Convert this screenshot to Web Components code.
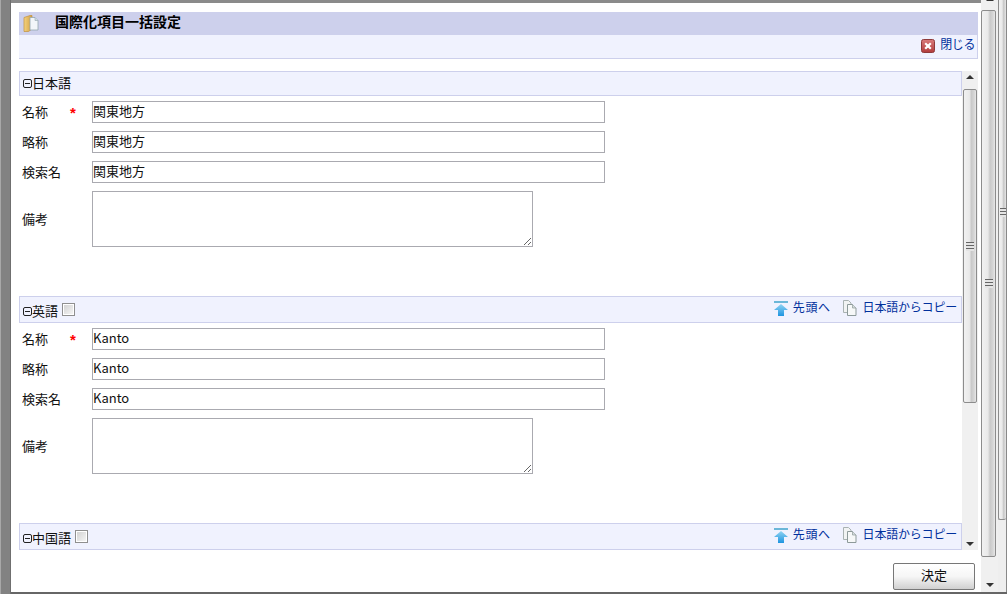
<!DOCTYPE html>
<html lang="ja">
<head>
<meta charset="utf-8">
<title>国際化項目一括設定</title>
<style>
  html, body { margin: 0; padding: 0; height: 100%; overflow: hidden; background: #fff; }
  body { font: 13px "Noto Sans CJK JP", "Liberation Sans", sans-serif; color: #111; }
</style>
</head>
<body>
<app-shell>
  <dialog-title slot="head" text="国際化項目一括設定"></dialog-title>
  <close-bar slot="head"></close-bar>
  <scroll-panel slot="body">
    <lang-section name="日本語" first>
      <form-row label="名称" required value="関東地方"></form-row>
      <form-row label="略称" value="関東地方"></form-row>
      <form-row label="検索名" value="関東地方"></form-row>
      <form-row label="備考" multiline></form-row>
    </lang-section>
    <lang-section name="英語" extra>
      <form-row label="名称" required value="Kanto"></form-row>
      <form-row label="略称" value="Kanto"></form-row>
      <form-row label="検索名" value="Kanto"></form-row>
      <form-row label="備考" multiline></form-row>
    </lang-section>
    <lang-section name="中国語" extra></lang-section>
  </scroll-panel>
  <push-button slot="foot" text="決定"></push-button>
</app-shell>

<script>
const icons = {
  folder: `<svg width="16" height="17" viewBox="0 0 16 17">
    <defs>
      <linearGradient id="f" x1="0" x2="1"><stop offset="0" stop-color="#f3d27f"/><stop offset="1" stop-color="#d39f42"/></linearGradient>
    </defs>
    <path d="M1 2.5 L7 .5 H9 V14 L5.5 16.5 H1 Z" fill="url(#f)" stroke="#c08f3e" stroke-width=".7"/>
    <path d="M7 2.5 H12 L15 5.5 V15 H7 Z" fill="#f2f6f9" stroke="#93a6af" stroke-width=".8"/>
    <path d="M12 2.5 V5.5 H15" fill="#cfdbe1" stroke="#93a6af" stroke-width=".6"/>
  </svg>`,
  close: `<svg width="14" height="14" viewBox="0 0 14 14">
    <defs>
      <linearGradient id="c" x1="0" x2="0" y1="0" y2="1"><stop offset="0" stop-color="#d97b7b"/><stop offset="1" stop-color="#b23b3b"/></linearGradient>
    </defs>
    <rect x=".5" y=".5" width="13" height="13" rx="2" fill="url(#c)" stroke="#8e3a3a"/>
    <path d="M4.2 4.2 L9.8 9.8 M9.8 4.2 L4.2 9.8" stroke="#fff" stroke-width="2.2"/>
  </svg>`,
  top: `<svg width="16" height="16" viewBox="0 0 16 16">
    <defs>
      <linearGradient id="t" x1="0" x2="0" y1="0" y2="1"><stop offset="0" stop-color="#8fd3f2"/><stop offset="1" stop-color="#1f95e0"/></linearGradient>
    </defs>
    <rect x="1" y="1" width="14" height="2" fill="#6bb7d8"/>
    <path d="M8 4 L15 10 H11 V16 H5 V10 H1 Z" fill="url(#t)"/>
  </svg>`,
  copy: `<svg width="15" height="16" viewBox="0 0 15 16">
    <path d="M1.5 .5 H6.5 L9 3 V12.5 H1.5 Z" fill="#f1f3f3" stroke="#a9b2b2"/>
    <path d="M5.5 4.5 H10.5 L14 8 V15.5 H5.5 Z" fill="#f6f8f8" stroke="#8d9a9a"/>
    <path d="M10.5 4.5 V8 H14" fill="#d6dddd" stroke="#8d9a9a" stroke-width=".7"/>
  </svg>`
};

const define = (tag, html) => {
  customElements.define(tag, class extends HTMLElement {
    constructor() {
      super();
      this.attachShadow({ mode: 'open' });
    }
    connectedCallback() {
      this.shadowRoot.innerHTML = html(this);
    }
  });
};

define('app-shell', () => `
  <style>
    :host { display: flex; width: 1007px; height: 594px; background: #fff; overflow: hidden; }
    .edge { flex: none; width: 11px; background: linear-gradient(90deg, #a8a8a8 0, #a8a8a8 1px, #828282 1px, #828282 10px, #6f6f6f 10px); }
    .main { flex: 1; display: flex; flex-direction: column; min-width: 0; }
    .top { flex: none; height: 3px; background: #8a8a8a; }
    .bottom { flex: none; height: 2px; background: #666; }
    .content { flex: 1; display: flex; flex-direction: column; padding: 9px 3px 0 8px; min-height: 0; }
    .head { display: block; flex: none; margin-bottom: 12px; }
    .foot { flex: none; display: flex; justify-content: flex-end; padding: 13px 3px 2px 0; }
    .bars { display: flex; flex: none; height: 592px; }
  </style>
  <div class="edge"></div>
  <div class="main">
    <div class="top"></div>
    <div class="content">
      <div class="head"><slot name="head"></slot></div>
      <slot name="body"></slot>
      <div class="foot"><slot name="foot"></slot></div>
    </div>
    <div class="bottom"></div>
  </div>
  <div style="display:flex;flex-direction:column">
    <div class="bars">
      <scroll-bar width="17" thumb-top="10" thumb-height="547" grip="283" arrows></scroll-bar>
      <scroll-bar width="9" thumb-top="-40" thumb-height="560" grip="212" edge></scroll-bar>
    </div>
    <div class="bottom"></div>
  </div>`);

define('dialog-title', el => `
  <style>
    :host { display: flex; align-items: center; height: 23px; background: #cdd0ec; }
    .icon { display: flex; margin-left: 4px; width: 32px; }
    b { font-size: 14px; line-height: 16px; color: #000; padding-bottom: 5px; }
  </style>
  <span class="icon">${icons.folder}</span>
  <b>${el.getAttribute('text')}</b>`);

define('close-bar', () => `
  <style>
    :host { display: flex; justify-content: flex-end; align-items: center; box-sizing: border-box; height: 24px;
      background: #f0f2fe; border: solid #cdd0ec; border-width: 0 1px 1px 0; padding: 0 2px 2px 0; }
  </style>
  <action-link icon="close" text="閉じる" gap="5" lift="4" spacing="-.4"></action-link>`);

define('action-link', el => `
  <style>
    :host { display: inline-flex; align-items: center; color: #00309c; font-size: 12px; white-space: nowrap; cursor: pointer; }
    span { display: flex; margin-right: ${el.getAttribute('gap') || 5}px; }
    em { font-style: normal; line-height: 14px; padding-bottom: ${el.getAttribute('lift') || 2}px; letter-spacing: ${el.getAttribute('spacing') || 0}px; }
  </style>
  <span>${icons[el.getAttribute('icon')]}</span><em>${el.getAttribute('text')}</em>`);

define('scroll-panel', () => `
  <style>
    :host { display: flex; height: 479px; flex: none; overflow: hidden; }
    .view { flex: 1; min-width: 0; overflow: hidden; }
  </style>
  <div class="view"><slot></slot></div>
  <scroll-bar width="16" thumb-top="18" thumb-height="314" grip="175" arrows inner></scroll-bar>`);

define('scroll-bar', el => {
  const top = +el.getAttribute('thumb-top');
  const height = +el.getAttribute('thumb-height');
  const grip = +el.getAttribute('grip');
  const arrows = el.hasAttribute('arrows');
  return `
  <style>
    :host { display: block; flex: none; position: relative; box-sizing: border-box; width: ${el.getAttribute('width')}px; height: 100%;
      background: #f0f0f0; overflow: hidden; }
    :host([edge]) { border-right: 1px solid #888; background: #eee; }
    .thumb { position: absolute; left: 0; right: 2px; top: ${top}px; height: ${height}px; box-sizing: border-box;
      border: 1px solid #8c8c8c; border-radius: 2px;
      background: linear-gradient(90deg, #f1f1f1 0, #e9e9e9 45%, #c9c9c9 62%, #d6d6d6 85%, #e8e8e8 100%); }
    :host([edge]) .thumb { border-right: 0; right: 0; }
    :host([inner]) .thumb { left: 1px; right: 1px; }
    .grip { position: absolute; left: 50%; margin-left: -4px; top: ${grip - top - 5}px; width: 8px; height: 9px;
      background: repeating-linear-gradient(180deg, #666 0, #666 1px, #e4e4e4 1px, #e4e4e4 3px); }
    :host([edge]) .grip { margin-left: -3px; }
    .arrow { position: absolute; left: 50%; margin-left: -4px; width: 0; height: 0; border: 4px solid transparent; }
    .up { top: 4px; border-top: 0; border-bottom: 4px solid #333; }
    .down { bottom: 4px; border-bottom: 0; border-top: 4px solid #333; }
    :host(:not([inner])) .up { top: -3px; }
    :host(:not([inner])) .down { bottom: 5px; }
  </style>
  ${arrows ? '<i class="arrow up"></i><i class="arrow down"></i>' : ''}
  <div class="thumb"><div class="grip"></div></div>`;
});

define('lang-section', el => {
  const extra = el.hasAttribute('extra');
  return `
  <style>
    :host { display: block; margin-bottom: 49px; }
    header { display: flex; align-items: center; box-sizing: border-box; height: ${extra ? 27 : 25}px; padding: 0 3px;
      background: #f0f2fe; border: 1px solid #cdd0ec; }
    .caption { display: flex; align-items: center; margin-right: 4px; ${extra ? 'margin-top: 2px;' : 'margin-bottom: 2px;'} }
    .tree { flex: none; box-sizing: border-box; width: 9px; height: 9px; border: 1px solid #222; border-radius: 2px; position: relative; margin-top: 1px; }
    .tree::after { content: ""; position: absolute; left: 1px; right: 1px; top: 3px; height: 1px; background: #222; }
    .name { color: #111; line-height: 17px; }
    input { appearance: none; box-sizing: border-box; width: 13px; height: 13px; margin: 0; border: 1px solid #8f8f8f;
      background: linear-gradient(135deg, #cfcfcf, #f8f8f8); box-shadow: inset 0 0 0 1px #fff; }
    .links { margin-left: auto; display: flex; gap: 11px; padding-right: 1px; padding-bottom: 3px; }
    .rows { display: flex; flex-direction: column; gap: 8px; padding-top: 5px; }
  </style>
  <header>
    <span class="caption"><span class="tree"></span><span class="name">${el.getAttribute('name')}</span></span>
    ${extra ? `<input type="checkbox" aria-label="${el.getAttribute('name')}">
    <div class="links">
      <action-link icon="top" text="先頭へ" gap="4" spacing=".6"></action-link>
      <action-link icon="copy" text="日本語からコピー" gap="6" spacing="-.2"></action-link>
    </div>` : ''}
  </header>
  <div class="rows"><slot></slot></div>`;
});

define('form-row', el => {
  const multi = el.hasAttribute('multiline');
  const field = multi
    ? '<textarea></textarea>'
    : `<input type="text" value="${el.getAttribute('value') || ''}">`;
  return `
  <style>
    :host { display: flex; align-items: center; padding-left: 3px; }
    label { flex: none; width: 48px; color: #111; line-height: 16px; padding-bottom: 1px; }
    .req { flex: none; width: 22px; color: #f00; font: bold 15px/17px "Liberation Sans", sans-serif; }
    input, textarea { box-sizing: border-box; margin: 0; border: 1px solid #aaaab0; border-radius: 0; outline: 0; background: #fff; color: #111;
      font: 13px "Noto Sans CJK JP", "Liberation Sans", sans-serif; }
    input { width: 513px; height: 22px; padding: 0 0 3px 0; line-height: 16px; }
    textarea { display: block; width: 441px; height: 56px; resize: both; padding: 1px; }
  </style>
  <label>${el.getAttribute('label')}</label>
  <span class="req">${el.hasAttribute('required') ? '*' : ''}</span>
  ${field}`;
});

define('push-button', el => `
  <style>
    :host { display: block; }
    button { display: block; box-sizing: border-box; width: 82px; height: 27px; margin: 0; padding: 0 0 4px;
      border: 1px solid #777; border-radius: 2px; background: linear-gradient(180deg, #fff 0, #f6f6f6 50%, #d0d0d0 100%);
      font: 13px/17px "Noto Sans CJK JP", sans-serif; color: #111; }
  </style>
  <button>${el.getAttribute('text')}</button>`);
</script>
</body>
</html>
